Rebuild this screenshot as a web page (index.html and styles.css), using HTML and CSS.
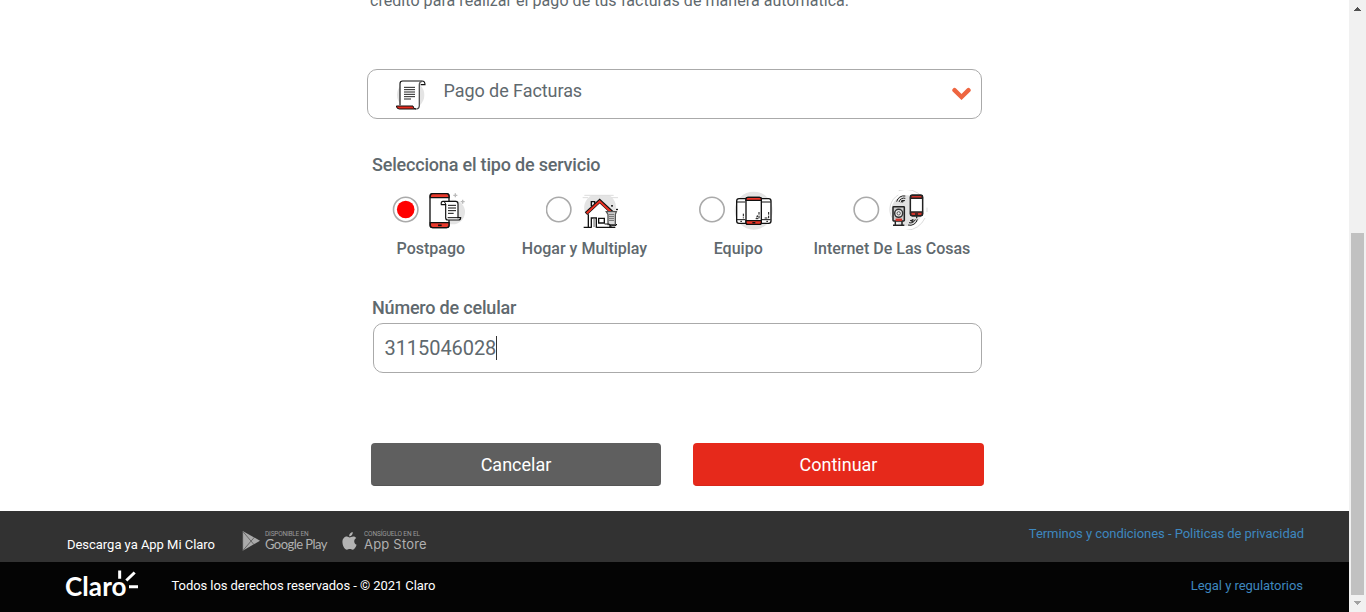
FILE: index.html
```html
<!DOCTYPE html>
<html lang="es">
<head>
<meta charset="utf-8">
<title>Mi Claro - Pago de Facturas</title>
<link rel="stylesheet" href="styles.css">
</head>
<body>
<div class="page">
  <main class="content">
    <p class="intro">crédito para realizar el pago de tus facturas de manera automática.</p>
    <div class="select">
      <svg class="bill" viewBox="105 235 96 99" fill="none">
        <circle cx="152" cy="286" r="41" fill="#e4e4e4"/>
        <path d="M120 318V253q0-9 8-9h57l-6 10v66q-2 8-9 8h-10l-4-9h-36z" fill="#fff"/>
        <path d="M120 317V252q0-8 8-8h58q9 0 9 11h-13" stroke="#111" stroke-width="3.4"/>
        <path d="M186 245q-8 1-8 10v64q-1 9-9 9" stroke="#555" stroke-width="4"/>
        <path d="M109 319h50q1 9 9 9h-50q-8 0-9-9z" fill="#e62b1e" stroke="#111" stroke-width="3"/>
        <path d="M132 263h33M132 270h33M132 277h33M132 284h33M132 291h33M132 298h21" stroke="#222" stroke-width="3"/>
      </svg>
      <span class="select-text">Pago de Facturas</span>
      <svg class="chevron" viewBox="0 0 20 14"><path d="M3.500 3.200l7 6.800 7-6.800" fill="none" stroke="#ee6540" stroke-width="4.4" stroke-linecap="round"/></svg>
    </div>
    <h2 class="label label-service">Selecciona el tipo de servicio</h2>
    <div class="options">
      <label class="option">
        <span class="pick"><svg class="radio" viewBox="0 0 27 27"><circle cx="13.700" cy="13.500" r="12.200" fill="#fff" stroke="#aaa" stroke-width="1.600"/><circle cx="13.700" cy="13.500" r="8.800" fill="#f00"/></svg>
        <svg class="icon" viewBox="126 15 120 120" fill="none" stroke="#111" stroke-width="4">
          <circle cx="203" cy="81" r="37" fill="#e4e4e4" stroke="none"/>
          <rect x="135" y="26" width="57" height="102" rx="8" fill="#fff"/>
          <path d="M136 38V33q0-7 7-7h42q7 0 7 7v5zM136 113h56v8q0 7-7 7h-42q-7 0-7-7z" fill="#e93a2c"/>
          <path d="M159 121h11" stroke-width="5"/>
          <path d="M174 49h38q7 0 7 8v41h8q0 7-7 7h-31q-7 0-7-7V59h-13q-2-10 5-10z" fill="#fff" stroke-width="3.5"/>
          <path d="M182 59q0-8-6-9M188 98h31M189 61h24M189 69h24M189 77h24M189 85h17" stroke-width="3"/>
          <path d="M211 25v12M205 31h12M233 44v12M227 50h12" stroke="#bbb" stroke-width="4"/>
        </svg></span>
        <span class="name">Postpago</span>
      </label>
      <label class="option">
        <span class="pick"><svg class="radio" viewBox="0 0 27 27"><circle cx="12.700" cy="13.500" r="12.200" fill="#fff" stroke="#aaa" stroke-width="1.600"/></svg>
        <svg class="icon" viewBox="197 15 120 120" fill="none" stroke="#111" stroke-width="4">
          <path d="M211 88a43 43 0 0 1 18-57h53a43 43 0 0 1 16 54z" fill="#e4e4e4" stroke="none"/>
          <path d="M202 38h16M207 31h88M288 38h20" stroke="#ddd" stroke-width="3"/>
          <path d="M219 82l34-30 33 31v44h-67z" fill="#fff" stroke="none"/>
          <path d="M228 64V50h10v9M219 88v39M284 118v9M205 127h25M241 127h59" />
          <path d="M212 86l41-38 41 38" stroke-width="11"/>
          <path d="M214 85l39-36 38 36" stroke="#ec3223" stroke-width="6"/>
          <path d="M228 127V99h15v28" fill="#fff"/>
          <path d="M237 101v25" stroke="#aaa" stroke-width="7"/>
          <path d="M250 100h17v14h-17z" fill="#fff"/>
          <path d="M273 80h30l-3 8v31h-22V88z" fill="#ddd" stroke="#555"/>
          <path d="M281 88h15M281 94h15M281 100h15M281 106h15" stroke="#555" stroke-width="2.6"/>
          <path d="M268 117h14q0 5 7 5h10q5 0 5-5M287 122v5" stroke-width="3"/>
          <path d="M290 60v5M287 62.500h6M305 71v5M302 73.500h6" stroke-width="3"/>
        </svg></span>
        <span class="name">Hogar y Multiplay</span>
      </label>
      <label class="option">
        <span class="pick"><svg class="radio" viewBox="0 0 27 27"><circle cx="13" cy="13.500" r="12.200" fill="#fff" stroke="#aaa" stroke-width="1.600"/></svg>
        <svg class="icon" viewBox="132 15 120 120" fill="none" stroke="#111" stroke-width="4">
          <circle cx="191" cy="77" r="57" fill="#e4e4e4" stroke="none"/>
          <rect x="140" y="41" width="49" height="74" rx="7" fill="#fff"/>
          <rect x="194" y="41" width="49" height="74" rx="7" fill="#fff"/>
          <path d="M141 51h25M215 51h27M141 104h25M215 104h27M151 109h5M229 109h5" stroke-width="3"/>
          <rect x="168" y="37" width="46" height="81" rx="6" fill="#fff"/>
          <path d="M168 46v-4q0-5 6-5h34q6 0 6 5v4zM168 107h46v6q0 5-6 5h-34q-6 0-6-5z" fill="#ed3528"/>
          <path d="M187 113h9" stroke-width="4"/>
          <path d="M207 81v20h-10M236 81v18h-12M202 91v5h-5M160 86v14" stroke-width="3" stroke-dasharray="8 3"/>
        </svg></span>
        <span class="name">Equipo</span>
      </label>
      <label class="option">
        <span class="pick"><svg class="radio" viewBox="0 0 27 27"><circle cx="13.300" cy="13.500" r="12.200" fill="#fff" stroke="#aaa" stroke-width="1.600"/></svg>
        <svg class="icon" viewBox="250 15 120 120" fill="none" stroke="#222" stroke-width="4.500">
          <circle cx="306" cy="77" r="46" fill="#e2e2e2" stroke="none"/>
          <path d="M262 98a50 50 0 0 1 19-68M282 17a63 63 0 0 1 73 22M367 68v13M361 99a63 63 0 0 1-56 37" stroke="#ddd" stroke-width="3"/>
          <rect x="317" y="31" width="37" height="61" rx="5" fill="#fff"/>
          <path d="M318 40v-4q0-5 5-5h25q5 0 5 5v4zM318 81h35v6q0 5-5 5h-25q-5 0-5-5z" fill="#cf332b"/>
          <path d="M331 87h9M336 94v6" stroke-width="4"/>
          <rect x="265" y="65" width="34" height="43" rx="2" fill="#ccc"/>
          <circle cx="282" cy="85" r="12" fill="#eee" stroke="#333"/>
          <circle cx="282" cy="85" r="5" stroke="#555" stroke-width="3"/>
          <path d="M275 103h15v3h-15z" fill="#d6382f" stroke="#cf332b"/>
          <path d="M272 109v12M292 109v12M265 121h34"/>
          <path d="M276 50a22 22 0 0 1 26-17M283 51a15 15 0 0 1 19-11M289 52a9 9 0 0 1 12-5M310 120a22 22 0 0 0 28-17M313 113a15 15 0 0 0 19-10M316 107a9 9 0 0 0 10-5" stroke-width="3"/>
          <circle cx="293" cy="49" r="1.500"/><circle cx="323" cy="107" r="1.500"/>
        </svg></span>
        <span class="name name-iot">Internet De Las Cosas</span>
      </label>
    </div>
    <h2 class="label label-number">Número de celular</h2>
    <div class="input"><span class="value">3115046028</span><span class="caret"></span></div>
    <div class="buttons">
      <button class="button cancel">Cancelar</button>
      <button class="button continue">Continuar</button>
    </div>
  </main>
  <footer>
    <div class="bar download">
      <span class="download-text">Descarga ya App Mi Claro</span>
      <div class="store">
        <svg class="play" viewBox="0 0 57 60"><path d="M2 0l52 29L2 59z" fill="#aaa"/><path d="M4 3l32 38M4 57l33-38M2 0v59" fill="none" stroke="#444" stroke-width="2"/></svg>
        <span class="store-copy"><small class="small-play">DISPONIBLE EN</small><b class="google">Google Play</b></span>
      </div>
      <div class="store apple-store">
        <svg class="apple" viewBox="0 0 44 56" fill="#b3b3b3"><path d="M32 0c1 8-5 14-11 13C20 7 26 1 32 0zM22 17c4 0 6-3 12-3 4 0 7 2 9 5-9 5-8 17 1 21-2 7-7 15-12 15-4 0-5-2-9-2s-6 2-9 2C7 55 0 42 0 31c0-11 7-17 14-17 4 0 6 3 8 3z"/></svg>
        <span class="store-copy"><small class="small-apple">CONSÍGUELO EN EL</small><b class="app">App Store</b></span>
      </div>
      <a class="link terms">Terminos y condiciones - Politicas de privacidad</a>
    </div>
    <div class="bar legal">
      <span class="logo"><span class="logo-text">Claro</span><svg class="rays" viewBox="0 0 66 56" fill="none" stroke="#fff" stroke-width="9"><path d="M11 1v25M31 31L56 7M39 50h27"/></svg></span>
      <span class="rights">Todos los derechos reservados - © 2021 Claro</span>
      <a class="link regulation">Legal y regulatorios</a>
    </div>
  </footer>
</div>
<div class="scrollbar">
  <svg class="arrow up" viewBox="0 0 7 4" shape-rendering="crispEdges"><path d="M0 4h7v-1h-1v-1h-1v-1h-1v-1h-1v1h-1v1h-1v1h-1z" fill="#505050"/></svg>
  <div class="thumb"></div>
  <svg class="arrow down" viewBox="0 0 7 4" shape-rendering="crispEdges"><path d="M0 0h7v1h-1v1h-1v1h-1v1h-1v-1h-1v-1h-1v-1h-1z" fill="#a3a3a3"/></svg>
</div>
</body>
</html>
```
FILE: styles.css
```css
* { box-sizing: border-box; }
body { margin: 0; height: 612px; overflow: hidden; display: flex; background: #fff; color: #5f696e; font-family: Roboto, sans-serif; }
.page { width: 1349px; height: 612px; display: flex; flex-direction: column; }
.content { height: 511px; padding-left: 367px; overflow: hidden; }
.intro { margin: -10px 0 0 3px; height: 79px; font-size: 16px; line-height: 21px; white-space: nowrap; letter-spacing: .05px; }
.select { width: 615px; height: 50px; border: 1px solid #aaa; border-radius: 10px; display: flex; align-items: flex-start; }
.bill { width: 32px; height: 33px; margin: 8.4px 0 0 27px; }
.select-text { margin: 10px 0 0 16.5px; font-size: 18px; line-height: 22px; letter-spacing: -.06px; }
.chevron { width: 20px; height: 14px; margin: 17px 10px 0 auto; }
.label { margin: 0; font-size: 18px; line-height: 22px; font-weight: 500; white-space: nowrap; letter-spacing: -.19px; }
.label-service { margin: 35px 0 0 5px; }
.options { display: flex; margin: 14px 0 0 -13px; }
.option { width: 153.7px; height: 70px; display: flex; flex-direction: column; }
.pick { display: flex; padding-left: 38px; gap: 8px; height: 40px; }
.radio { width: 27px; height: 27px; margin-top: 6px; }
.icon { width: 40px; height: 40px; }
.name { margin-top: 9px; text-align: center; font-size: 16px; line-height: 20px; font-weight: 500; white-space: nowrap; }
.name-iot { margin-left: -1.6px; }
.label-number { margin: 37px 0 0 5px; }
.input { margin: 4px 0 0 6px; width: 609px; height: 50px; border: 1px solid #aaa; border-radius: 10px; display: flex; align-items: center; padding-left: 10.5px; font-size: 20px; }
.value { letter-spacing: -.06px; }
.caret { width: 1px; height: 24px; background: #333; }
.buttons { display: flex; gap: 32px; margin: 70px 0 0 4px; }
.button { width: 290px; height: 43px; padding: 2px 0 0; border: 0; border-bottom: 1px solid #555; border-radius: 4px; background: #5f5f5f; color: #fff; font: 400 18px/40px Roboto, sans-serif; }
.continue { width: 291px; background: #e6291b; border-bottom-color: #d8261a; }
.bar { display: flex; height: 51px; color: #fff; font-size: 13px; white-space: nowrap; }
.download { background: #323232; padding-left: 67px; }
.download-text { width: 174.5px; margin-top: 25px; line-height: 18px; letter-spacing: -.03px; }
.store { display: flex; width: 100.5px; }
.play { width: 19px; height: 20px; margin-top: 20px; }
.store-copy { display: flex; flex-direction: column; margin: 20px 0 0 4.5px; color: #b0b0b0; }
.store-copy small { line-height: 7px; height: 7px; font-size: 6.5px; color: #999; }
.store-copy b { font: 400 13px/13px Lato, sans-serif; }
.store-copy .google { letter-spacing: -.55px; }
.store-copy .app { font: 400 13px/13px Inter, sans-serif; letter-spacing: .2px; }
.small-play { letter-spacing: -.2px; }
.small-apple { letter-spacing: -.12px; }
.apple { width: 15px; height: 18px; margin-top: 21px; }
.apple-store .store-copy { margin-left: 7px; }
.link { color: #3e87bf; line-height: 18px; margin-left: auto; letter-spacing: -.045px; }
.terms { margin-top: 14px; margin-right: 45px; }
.legal { background: #040404; height: 50px; padding-left: 65px; }
.logo { display: flex; width: 106.5px; position: relative; }
.logo-text { margin-top: 10px; font: 700 26px/28px Lato, sans-serif; letter-spacing: .1px; }
.rays { position: absolute; left: 51px; top: 8px; width: 22px; height: 19px; }
.rights { margin-top: 15px; line-height: 18px; letter-spacing: -.065px; }
.regulation { margin-top: 15px; margin-right: 46px; }
.scrollbar { width: 17px; height: 612px; background: #f1f1f1; display: flex; flex-direction: column; align-items: center; }
.arrow { width: 7px; height: 4px; }
.up { margin-top: 7px; }
.thumb { width: 13px; height: 362px; margin-top: 222px; background: #c1c1c1; }
.down { margin-top: 6px; }
```
